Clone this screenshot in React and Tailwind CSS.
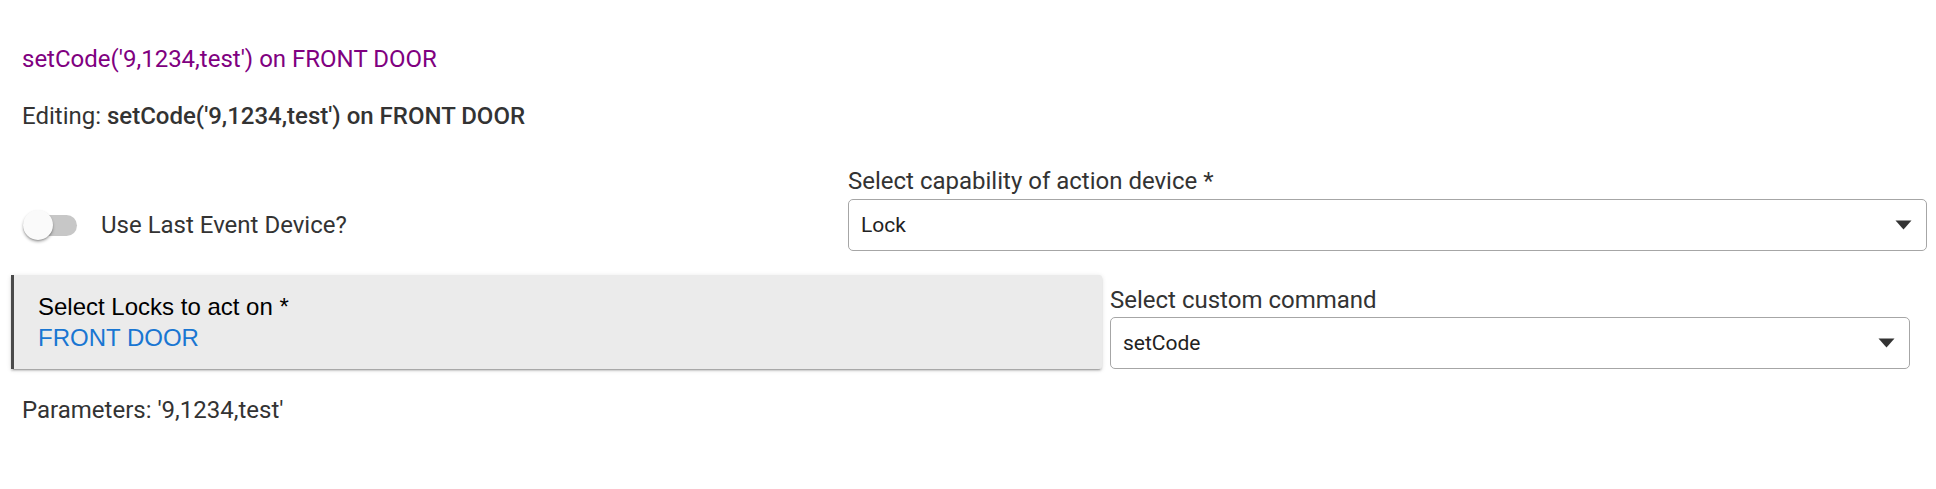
import React from "react";

function Caret() {
  return (
    <svg width="17" height="10" viewBox="0 0 17 10" className="shrink-0">
      <polygon points="0.5,0.5 16.5,0.5 8.5,9.5" fill="#333" />
    </svg>
  );
}

function Dropdown({ value }) {
  return (
    <div className="h-[52px] border border-[#a6a6a6] rounded-[5px] bg-white flex items-center justify-between pl-[12px] pr-[14px]">
      <span className="text-[21px] text-[#222]">{value}</span>
      <Caret />
    </div>
  );
}

function Toggle() {
  return (
    <div className="relative w-[54px] h-[30px] flex items-center">
      <div className="w-[54px] h-[21px] rounded-full bg-[#c7c7c7]" />
      <div className="absolute left-0 top-0 w-[30px] h-[30px] rounded-full bg-[#fafafa] shadow-[0_2px_3px_rgba(0,0,0,0.3),0_1px_1px_rgba(0,0,0,0.14)]" />
    </div>
  );
}

export default function App() {
  return (
    <div className="w-[1936px] h-[489px] bg-white font-['Roboto',sans-serif] text-[24px] leading-[28px] text-[#333] pl-[11px]">
      <div className="pt-[45px] pl-[11px] text-[#800080]">setCode('9,1234,test') on FRONT DOOR</div>
      <div className="mt-[29px] pl-[11px]">
        Editing: <span className="font-medium">setCode('9,1234,test') on FRONT DOOR</span>
      </div>

      <div className="mt-[37px] flex">
        <div className="w-[837px] flex items-end">
          <div className="h-[52px] flex items-center gap-[24px] pl-[12px]">
            <Toggle />
            <span>Use Last Event Device?</span>
          </div>
        </div>
        <div className="w-[1079px]">
          <div className="mb-1">Select capability of action device *</div>
          <Dropdown value="Lock" />
        </div>
      </div>

      <div className="mt-[24px] flex items-end gap-[8px]">
        <div className="w-[1091px] bg-[#ebebeb] border-l-[3px] border-[#4a4a4a] rounded-r-[3px] pl-[24px] pt-[16px] pb-[16px] font-['Liberation_Sans',Arial,sans-serif] leading-[31px] shadow-[0_3px_1px_-2px_rgba(0,0,0,0.2),0_2px_2px_0_rgba(0,0,0,0.14),0_1px_5px_0_rgba(0,0,0,0.12)]">
          <div className="text-black">Select Locks to act on *</div>
          <div className="text-[#1976d2]">FRONT DOOR</div>
        </div>
        <div className="w-[800px]">
          <div className="mb-[3px]">Select custom command</div>
          <Dropdown value="setCode" />
        </div>
      </div>

      <div className="mt-[27px] pl-[11px]">Parameters: '9,1234,test'</div>
    </div>
  );
}
